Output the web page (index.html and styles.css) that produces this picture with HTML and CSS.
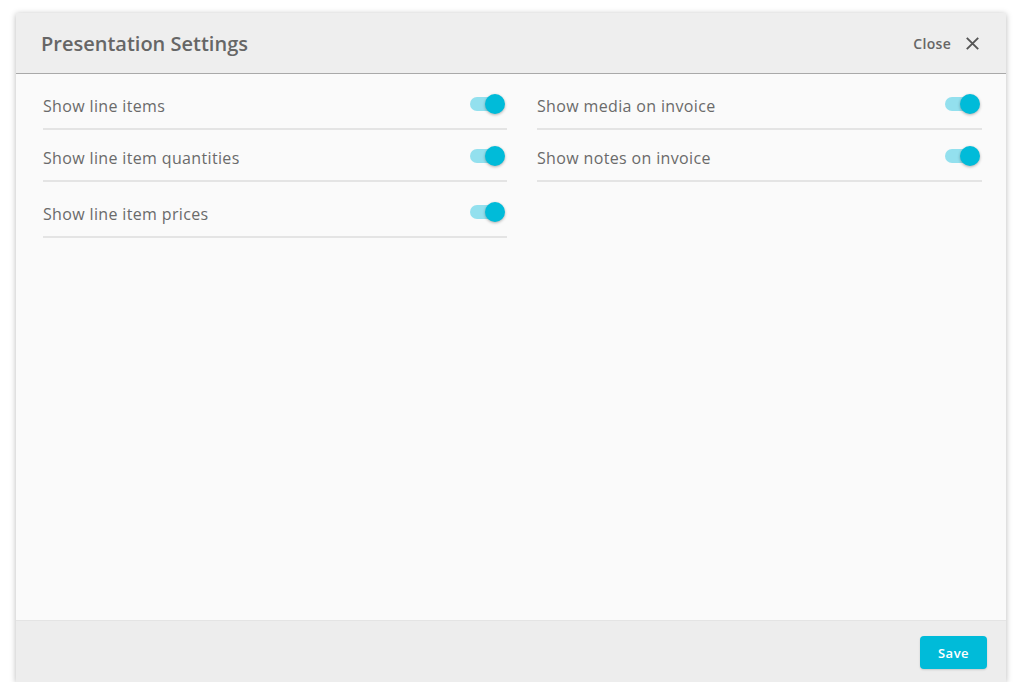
FILE: index.html
```html
<!DOCTYPE html>
<html>
<head>
<meta charset="utf-8">
<link rel="stylesheet" href="styles.css">
</head>
<body>
<div class="modal">
  <div class="modal-header">
    <h1 class="title">Presentation Settings</h1>
    <button class="close-btn"><span>Close</span>
      <svg width="13" height="13" viewBox="0 0 13 13"><path d="M0.8 0.8L12.2 12.2M12.2 0.8L0.8 12.2" stroke="#555" stroke-width="1.9" fill="none"/></svg>
    </button>
  </div>
  <div class="modal-body">
    <div class="col col-left">
      <div class="row"><span class="label">Show line items</span><span class="toggle"><span class="track"></span><span class="knob"></span></span></div>
      <div class="row"><span class="label">Show line item quantities</span><span class="toggle"><span class="track"></span><span class="knob"></span></span></div>
      <div class="row row-tall"><span class="label">Show line item prices</span><span class="toggle"><span class="track"></span><span class="knob"></span></span></div>
    </div>
    <div class="col col-right">
      <div class="row"><span class="label">Show media on invoice</span><span class="toggle"><span class="track"></span><span class="knob"></span></span></div>
      <div class="row"><span class="label">Show notes on invoice</span><span class="toggle"><span class="track"></span><span class="knob"></span></span></div>
    </div>
  </div>
  <div class="modal-footer">
    <button class="save-btn">Save</button>
  </div>
</div>
</body>
</html>
```
FILE: styles.css
```css
* { box-sizing: border-box; }
html, body { margin: 0; padding: 0; background: #fff; }
body {
  font-family: "Open Sans", "Noto Sans", sans-serif;
  padding: 13px 16px 0 16px;
}
.modal {
  width: 990px;
  height: 669px;
  display: flex;
  flex-direction: column;
  background: #fafafa;
  box-shadow: 0 1px 6px rgba(0,0,0,0.28);
}
.modal-header {
  height: 61px;
  background: #eeeeee;
  border-bottom: 1px solid #a9a9a9;
  display: flex;
  align-items: center;
  justify-content: space-between;
  padding: 0 27px 0 25px;
  flex-shrink: 0;
}
.title {
  margin: 0;
  font-size: 20px;
  font-weight: 600;
  color: #666;
  letter-spacing: 0;
}
.close-btn {
  border: 0;
  background: none;
  padding: 0;
  display: flex;
  align-items: center;
  gap: 15px;
  font-family: inherit;
  font-size: 14px;
  font-weight: 600;
  color: #666;
  letter-spacing: 0.3px;
  cursor: pointer;
}
.close-btn svg { display: block; }
.modal-body {
  flex: 1;
  display: grid;
  grid-template-columns: 464px 445px;
  column-gap: 30px;
  align-items: start;
  padding: 4px 0 0 27px;
}
.row {
  height: 52px;
  display: flex;
  align-items: center;
  justify-content: space-between;
  border-bottom: 2px solid #e4e4e4;
  padding-top: 3px;
}
.row-tall { height: 56px; padding-top: 7px; }
.label {
  font-size: 16px;
  color: #6a6a6a;
  letter-spacing: 0.35px;
  padding-top: 2px;
}
.toggle {
  position: relative;
  width: 35px;
  height: 20px;
  margin-right: 2px;
  margin-bottom: 2px;
}
.track {
  position: absolute;
  left: 0;
  top: 3px;
  width: 32px;
  height: 14px;
  border-radius: 7px;
  background: #93e0ee;
}
.knob {
  position: absolute;
  right: 0;
  top: 0;
  width: 20px;
  height: 20px;
  border-radius: 50%;
  background: #00bbd9;
  box-shadow: 0 1px 3px rgba(0,0,0,0.3);
}
.modal-footer {
  height: 62px;
  background: #ededed;
  border-top: 1px solid #e4e4e4;
  display: flex;
  align-items: center;
  justify-content: flex-end;
  padding: 0 19px 0 0;
  flex-shrink: 0;
}
.save-btn {
  width: 67px;
  height: 33px;
  border: 0;
  border-radius: 4px;
  background: #00bbd9;
  color: #fff;
  font-family: inherit;
  font-size: 13px;
  font-weight: 600;
  letter-spacing: 0.5px;
  box-shadow: 0 1px 2px rgba(0,0,0,0.15);
  margin-top: 2px;
}
```
